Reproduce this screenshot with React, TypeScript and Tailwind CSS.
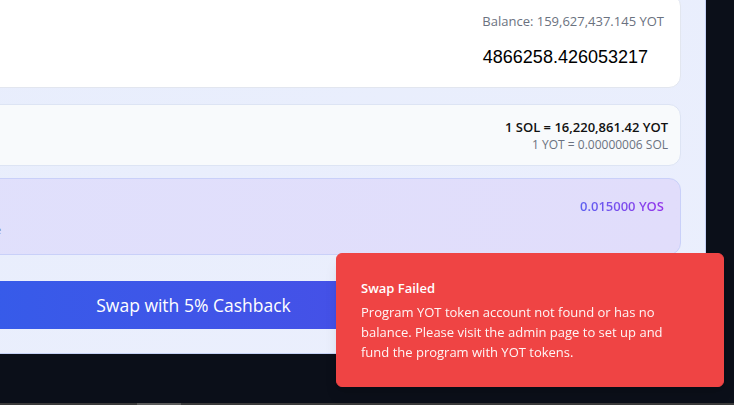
import React from "react";

const sans = { fontFamily: '"Open Sans", "Noto Sans", sans-serif' };

export default function App() {
  return (
    <div
      className="relative w-[734px] h-[405px] overflow-hidden flex flex-col bg-[#0b0f19]"
      style={sans}
    >
      <div className="flex-1 overflow-hidden">
        <div className="ml-[-319px] mt-[-31px] w-[1025px] border border-[#c5d1f5] bg-gradient-to-br from-[#e7edfc] to-[#ebeffd] p-6">
          {/* Output card */}
          <div className="rounded-xl border border-[#e2e6ef] bg-white p-4">
            <div className="flex h-5 items-center justify-end">
              <span className="text-[13px] leading-5 text-[#6b7280]">
                Balance: 159,627,437.145 YOT
              </span>
            </div>
            <div className="mt-[12px] flex items-center justify-end">
              <input
                readOnly
                value="4866258.426053217"
                className="h-7 w-[320px] bg-transparent px-4 text-right text-[18px] leading-7 text-black outline-none"
                style={{ fontFamily: '"Liberation Sans", Arial, sans-serif' }}
              />
            </div>
          </div>

          {/* Rate card */}
          <div className="mt-4 flex items-center justify-end rounded-xl border border-[#dde4f4] bg-[#f8fafc] px-3 py-3">
            <div className="flex flex-col items-end">
              <span className="text-[13px] font-semibold leading-5 text-[#111111]">
                1 SOL = 16,220,861.42 YOT
              </span>
              <span className="text-[12px] leading-4 text-[#6b7280]">
                1 YOT = 0.00000006 SOL
              </span>
            </div>
          </div>

          {/* Cashback card */}
          <div className="mt-3 rounded-xl border border-[#c9d0f9] bg-gradient-to-r from-[#e0e1fc] to-[#e1ddfb] p-4">
            <div className="flex h-6 items-center justify-end">
              <span className="bg-gradient-to-r from-[#5b5ff0] to-[#9333ea] bg-clip-text text-[13px] font-semibold text-transparent">
                0.015000 YOS
              </span>
            </div>
            <div className="ml-[272px] mt-[3px] text-[11px] leading-4 text-[#6b7280]">
              e
            </div>
          </div>

          {/* Swap button */}
          <button className="mt-[26px] flex h-12 w-full items-center justify-center rounded-lg bg-gradient-to-r from-[#2563eb] to-[#4f46e5] text-[17.5px] font-medium text-white">
            Swap with 5% Cashback
          </button>
        </div>
      </div>

      {/* bottom scrollbar strip */}
      <div className="flex h-[2px] bg-[#3a3a3a]">
        <div className="ml-[137px] h-full w-[44px] bg-[#5a5a5a]" />
      </div>

      {/* Toast */}
      <div className="absolute left-[336px] top-[253px] w-[388px] rounded-md border border-[#ef4444] bg-[#ef4444] p-6 pr-8 text-white shadow-lg">
        <div className="grid gap-1">
          <div className="text-[13px] font-semibold leading-5">Swap Failed</div>
          <div className="text-[13px] leading-5 opacity-95">
            Program YOT token account not found or has no balance. Please visit
            the admin page to set up and fund the program with YOT tokens.
          </div>
        </div>
      </div>
    </div>
  );
}
